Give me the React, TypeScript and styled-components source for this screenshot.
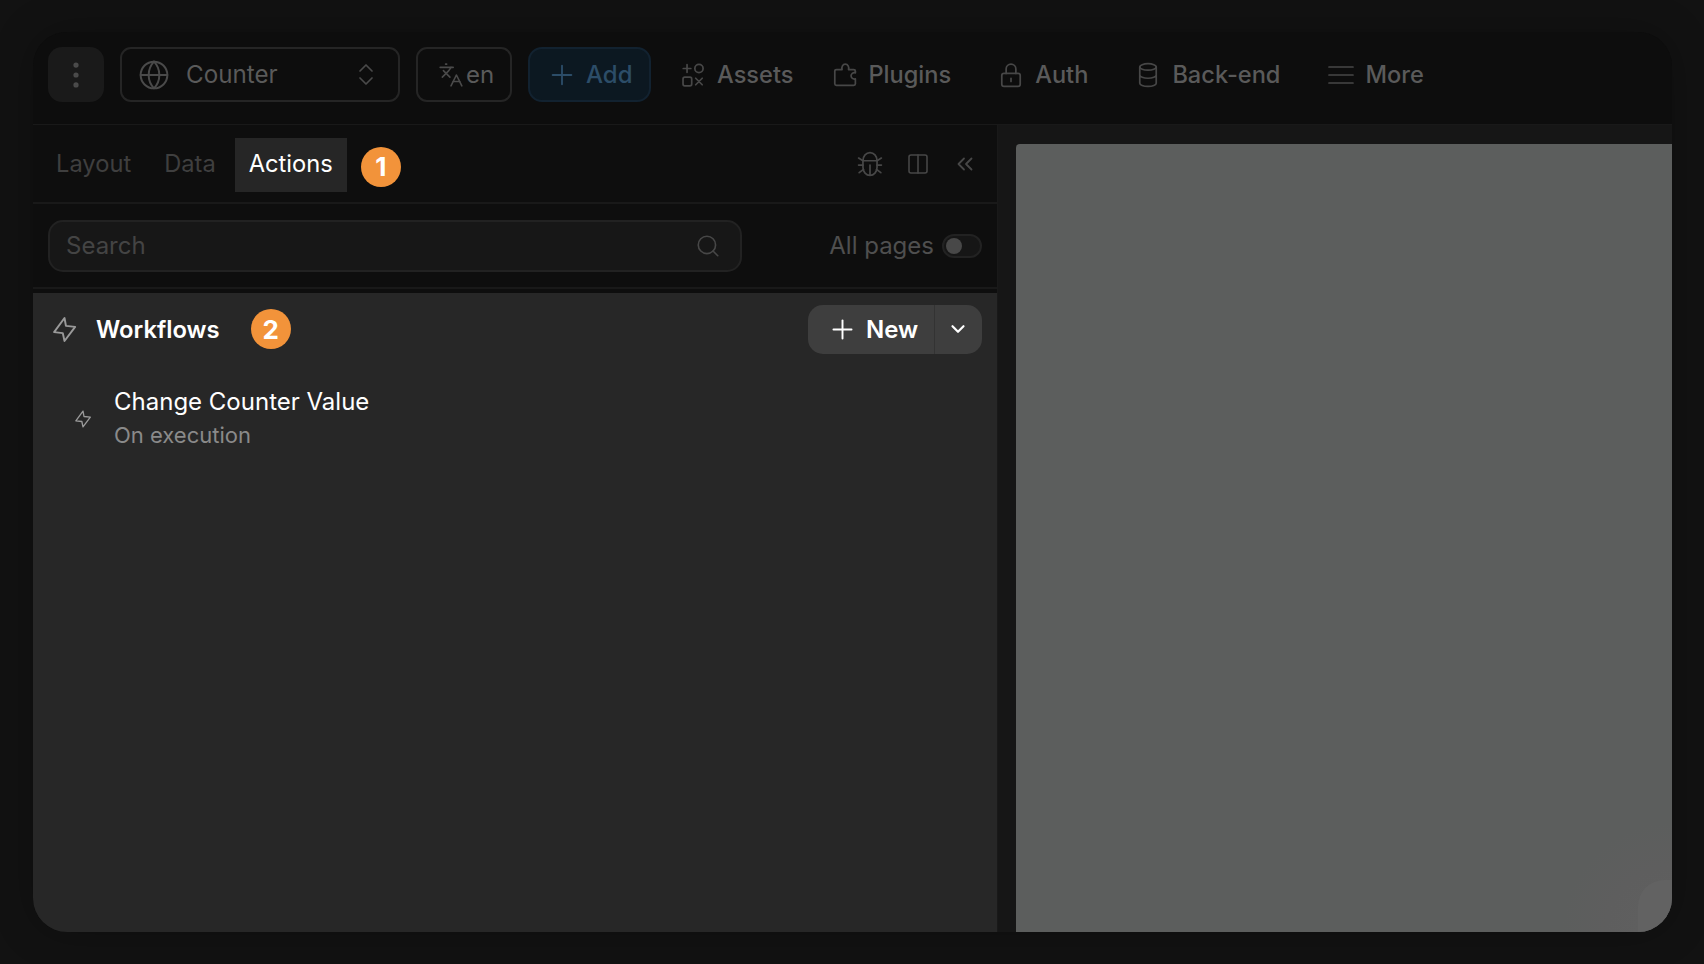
import React from "react";
import styled, { createGlobalStyle } from "styled-components";
import { EllipsisVertical, Globe, ChevronDown, Languages, Plus, Columns2, Search } from "lucide-react";

const Global = createGlobalStyle`
  html, body { margin: 0; padding: 0; background: #121212; }
  body { font-family: Inter, "Liberation Sans", sans-serif; }
  * { box-sizing: border-box; }
`;

const Page = styled.div`
  width: 1704px;
  height: 964px;
  padding: 32px 33px;
  background: #121212;
  overflow: hidden;
`;

const Frame = styled.div`
  width: 1639px;
  height: 900px;
  border-radius: 34px;
  background: #0d0d0d;
  box-shadow: 0 0 40px rgba(0, 0, 0, 0.25);
  overflow: hidden;
  display: flex;
  flex-direction: column;
`;

const Toolbar = styled.header`
  height: 92px;
  flex: none;
  padding: 15px 15px 22px;
  display: flex;
  align-items: center;
  gap: 16px;
  background: #0d0d0d;
`;

const DotsButton = styled.button`
  width: 56px;
  height: 55px;
  border: 0;
  padding: 0;
  border-radius: 14px;
  background: #1a1a1a;
  color: #4b4b4b;
  display: flex;
  align-items: center;
  justify-content: center;
`;

const OutlineBox = styled.div<{ $w: number }>`
  width: ${(p) => p.$w}px;
  height: 55px;
  border: 2px solid #252525;
  border-radius: 11px;
  display: flex;
  align-items: center;
  color: #5a5a5a;
  font-size: 24.2px;
`;

const SiteSelect = styled(OutlineBox)`
  padding: 0 25px 0 16px;
  gap: 16px;
`;

const SiteName = styled.span`
  flex: 1;
`;

const LangBox = styled(OutlineBox)`
  padding-left: 20px;
  gap: 2px;
  font-size: 24px;
`;

const AddButton = styled.div`
  width: 123px;
  height: 55px;
  margin-right: 12px;
  border: 2px solid #122230;
  border-radius: 14px;
  background: #0c1821;
  color: #2c4d68;
  font-size: 24px;
  font-weight: 500;
  display: flex;
  align-items: center;
  padding-left: 16px;
  gap: 8px;
`;

const NavItem = styled.div<{ $after: number }>`
  display: flex;
  align-items: center;
  gap: 10px;
  margin-right: ${(p) => p.$after}px;
  color: #5a5a5a;
  font-size: 23.6px;
  font-weight: 450;
`;

const NavIcon = styled.span`
  width: 28px;
  height: 28px;
  display: flex;
  align-items: center;
  justify-content: center;
  color: #474747;
`;

const Body = styled.div`
  flex: 1;
  min-height: 0;
  display: flex;
  border-top: 1px solid #191919;
`;

const LeftPanel = styled.section`
  width: 965px;
  flex: none;
  display: flex;
  flex-direction: column;
  background: #0e0e0e;
  border-right: 1px solid #191919;
`;

const TabsRow = styled.div`
  height: 79px;
  flex: none;
  display: flex;
  align-items: center;
  gap: 5px;
  border-bottom: 2px solid #191919;
  padding-left: 9px;
`;

const Tab = styled.div<{ $active?: boolean }>`
  height: 54px;
  margin-top: 2px;
  padding: 0 14px 3px;
  display: flex;
  align-items: center;
  font-size: 23.7px;
  color: ${(p) => (p.$active ? "#ffffff" : "#3f3f3f")};
  background: ${(p) => (p.$active ? "#262626" : "transparent")};
`;

const Badge = styled.span<{ $ml: number; $mt?: number }>`
  width: 40px;
  height: 40px;
  flex: none;
  margin-left: ${(p) => p.$ml}px;
  margin-top: ${(p) => p.$mt ?? 0}px;
  border-radius: 50%;
  background: #f2933a;
  color: #fff;
  font-size: 26px;
  font-weight: 700;
  display: flex;
  align-items: center;
  justify-content: center;
`;

const TabTools = styled.div`
  margin-left: auto;
  display: flex;
  align-items: center;
  gap: 23px;
  padding-right: 24px;
  color: #474747;
`;

const ChevronPair = styled.svg`
  margin-left: 4px;
`;

const SearchRow = styled.div`
  height: 85px;
  flex: none;
  display: flex;
  align-items: center;
  padding: 0 15px 0 15px;
  border-bottom: 2px solid #191919;
`;

const SearchBox = styled.div`
  width: 694px;
  height: 52px;
  border: 2px solid #222;
  border-radius: 15px;
  background: #171717;
  display: flex;
  align-items: center;
  justify-content: space-between;
  padding: 0 19px 0 16px;
  color: #444;
  font-size: 24px;
`;

const AllPages = styled.div`
  margin-left: auto;
  display: flex;
  align-items: center;
  gap: 8px;
  color: #4f4f4f;
  font-size: 24px;
`;

const Toggle = styled.span`
  width: 40px;
  height: 24px;
  border-radius: 12px;
  border: 2px solid #222;
  background: #161616;
  padding: 2px;
  display: flex;
  align-items: center;
`;

const ToggleKnob = styled.span`
  width: 16px;
  height: 16px;
  border-radius: 50%;
  background: #484848;
`;

const Workflows = styled.div`
  flex: 1;
  margin-top: 4px;
  background: #272727;
`;

const WorkflowsHead = styled.div`
  height: 72px;
  display: flex;
  align-items: center;
  padding: 0 15px 0 17px;
`;

const HeadTitle = styled.span`
  margin-left: 17px;
  color: #fff;
  font-size: 23.8px;
  font-weight: 600;
`;

const NewGroup = styled.div`
  margin-left: auto;
  width: 174px;
  height: 49px;
  border-radius: 15px;
  background: #3e3e3e;
  display: flex;
  color: #fff;
`;

const NewMain = styled.div`
  width: 127px;
  display: flex;
  align-items: center;
  padding-left: 19px;
  gap: 8px;
  border-right: 1px solid #333;
  font-size: 24px;
  font-weight: 600;
`;

const NewCaret = styled.div`
  flex: 1;
  display: flex;
  align-items: center;
  justify-content: center;
  padding-right: 2px;
`;

const FlowItem = styled.div`
  display: flex;
  align-items: center;
  padding: 0 0 0 40px;
  margin-top: 20px;
  gap: 21px;
`;

const FlowText = styled.div`
  display: flex;
  flex-direction: column;
`;

const FlowTitle = styled.span`
  color: #fff;
  font-size: 24px;
  line-height: 34px;
`;

const FlowSub = styled.span`
  color: #8a8a8a;
  font-size: 22px;
  line-height: 33px;
`;

const CanvasSide = styled.section`
  flex: 1;
  background: #161616;
  padding: 19px 0 0 18px;
  display: flex;
`;

const Canvas = styled.div`
  flex: 1;
  position: relative;
  background: radial-gradient(circle 110px at 100% 100%, #606060 0%, #5e5e5e 60%, #5c5e5d 100%);
  border-top-left-radius: 4px;
  overflow: hidden;
`;

const CornerGlow = styled.span`
  position: absolute;
  right: 0;
  bottom: 0;
  width: 34px;
  height: 52px;
  background: #626262;
  border-top-left-radius: 26px;
`;

const Bolt = ({ size, color }: { size: number; color: string }) => (
  <svg width={size} height={size} viewBox="0 0 24 24" fill="none" stroke={color} strokeWidth={1.6} strokeLinejoin="round" strokeLinecap="round">
    <path d="M12 2.5L13.2 9L20.8 9.8L12 21.5L10.6 15L3.4 14.2Z" />
  </svg>
);

const Icon = ({ size = 26, sw = 1.6, children }: { size?: number; sw?: number; children: React.ReactNode }) => (
  <svg width={size} height={size} viewBox="0 0 24 24" fill="none" stroke="currentColor" strokeWidth={sw} strokeLinecap="round" strokeLinejoin="round">
    {children}
  </svg>
);

const AssetsIcon = () => (
  <Icon>
    <path d="M6.5 2.5v7M3 6h7" />
    <circle cx="17.5" cy="6" r="3.8" />
    <rect x="2.8" y="14" width="8" height="8" rx="1.6" />
    <path d="M14.5 15l6 6M20.5 15l-6 6" />
  </Icon>
);

const PuzzleIcon = () => (
  <Icon>
    <path d="M5 7h5.2c-.6-2.4.6-5 3-5s3.6 2.6 3 5H21a1.5 1.5 0 0 1 1.5 1.5V10c-2.2-.6-4 .9-4 2.8s1.8 3.4 4 2.8v4.4a1.5 1.5 0 0 1-1.5 1.5H5a1.5 1.5 0 0 1-1.5-1.5V8.5A1.5 1.5 0 0 1 5 7z" />
  </Icon>
);

const LockIcon = () => (
  <Icon>
    <rect x="3.5" y="10.5" width="17" height="12" rx="2" />
    <path d="M7.5 10.5V6.5a4.5 4.5 0 0 1 9 0v4M12 15v3" />
  </Icon>
);

const DatabaseIcon = () => (
  <Icon>
    <ellipse cx="12" cy="4.6" rx="7.6" ry="3" />
    <path d="M4.4 4.6v15c0 1.7 3.4 3 7.6 3s7.6-1.3 7.6-3v-15M4.4 12c0 1.7 3.4 3 7.6 3s7.6-1.3 7.6-3" />
  </Icon>
);

const BugIcon = () => (
  <Icon>
    <path d="M5.5 9C5.5 4.5 8.5 1.5 12 1.5S18.5 4.5 18.5 9V15C18.5 19.5 15.5 22.5 12 22.5S5.5 19.5 5.5 15Z" />
    <path d="M5.5 9H18.5M12 13V22M1.5 6.5L5.5 9M22.5 6.5L18.5 9M1.5 13H5.5M22.5 13H18.5M2 20L6 17M22 20L18 17" />
  </Icon>
);

const LinesIcon = () => (
  <svg width="26" height="20" viewBox="0 0 26 20" fill="none" stroke="currentColor" strokeWidth={1.7} strokeLinecap="round">
    <path d="M1 2H25M1 10H25M1 18H25" />
  </svg>
);

const UpDownIcon = () => (
  <svg width="14" height="21" viewBox="0 0 14 21" fill="none" stroke="#4a4a4a" strokeWidth={1.7} strokeLinecap="round" strokeLinejoin="round">
    <path d="M1 7L7 1L13 7M1 14L7 20L13 14" />
  </svg>
);

const App: React.FC = () => (
  <>
    <Global />
    <Page>
      <Frame>
        <Toolbar>
          <DotsButton aria-label="Menu"><EllipsisVertical size={34} strokeWidth={1.7} /></DotsButton>
          <SiteSelect $w={280}>
            <Globe size={32} strokeWidth={1.5} color="#4a4a4a" />
            <SiteName>Counter</SiteName>
            <UpDownIcon />
          </SiteSelect>
          <LangBox $w={96}>
            <Languages size={26} strokeWidth={1.5} color="#4a4a4a" />
            en
          </LangBox>
          <AddButton><Plus size={32} strokeWidth={1.4} />Add</AddButton>
          <NavItem $after={21}><NavIcon><AssetsIcon /></NavIcon>Assets</NavItem>
          <NavItem $after={30}><NavIcon><PuzzleIcon /></NavIcon>Plugins</NavItem>
          <NavItem $after={30}><NavIcon><LockIcon /></NavIcon>Auth</NavItem>
          <NavItem $after={31}><NavIcon><DatabaseIcon /></NavIcon>Back-end</NavItem>
          <NavItem $after={0}><NavIcon><LinesIcon /></NavIcon>More</NavItem>
        </Toolbar>
        <Body>
          <LeftPanel>
            <TabsRow>
              <Tab>Layout</Tab>
              <Tab>Data</Tab>
              <Tab $active>Actions</Tab>
              <Badge $ml={9} $mt={6}>1</Badge>
              <TabTools>
                <BugIcon />
                <Columns2 size={24} strokeWidth={1.6} />
                <ChevronPair width="16" height="14" viewBox="0 0 16 14" fill="none" stroke="currentColor" strokeWidth={1.8} strokeLinecap="round" strokeLinejoin="round">
                  <path d="M7 1.5L1.5 7L7 12.5M14.5 1.5L9 7L14.5 12.5" />
                </ChevronPair>
              </TabTools>
            </TabsRow>
            <SearchRow>
              <SearchBox>Search<Search size={26} strokeWidth={1.5} color="#474747" /></SearchBox>
              <AllPages>All pages<Toggle><ToggleKnob /></Toggle></AllPages>
            </SearchRow>
            <Workflows>
              <WorkflowsHead>
                <Bolt size={29} color="#9a9a9a" />
                <HeadTitle>Workflows</HeadTitle>
                <Badge $ml={31}>2</Badge>
                <NewGroup>
                  <NewMain><Plus size={31} strokeWidth={1.5} />New</NewMain>
                  <NewCaret><ChevronDown size={22} strokeWidth={2.4} /></NewCaret>
                </NewGroup>
              </WorkflowsHead>
              <FlowItem>
                <Bolt size={20} color="#9a9a9a" />
                <FlowText>
                  <FlowTitle>Change Counter Value</FlowTitle>
                  <FlowSub>On execution</FlowSub>
                </FlowText>
              </FlowItem>
            </Workflows>
          </LeftPanel>
          <CanvasSide>
            <Canvas><CornerGlow /></Canvas>
          </CanvasSide>
        </Body>
      </Frame>
    </Page>
  </>
);

export default App;
